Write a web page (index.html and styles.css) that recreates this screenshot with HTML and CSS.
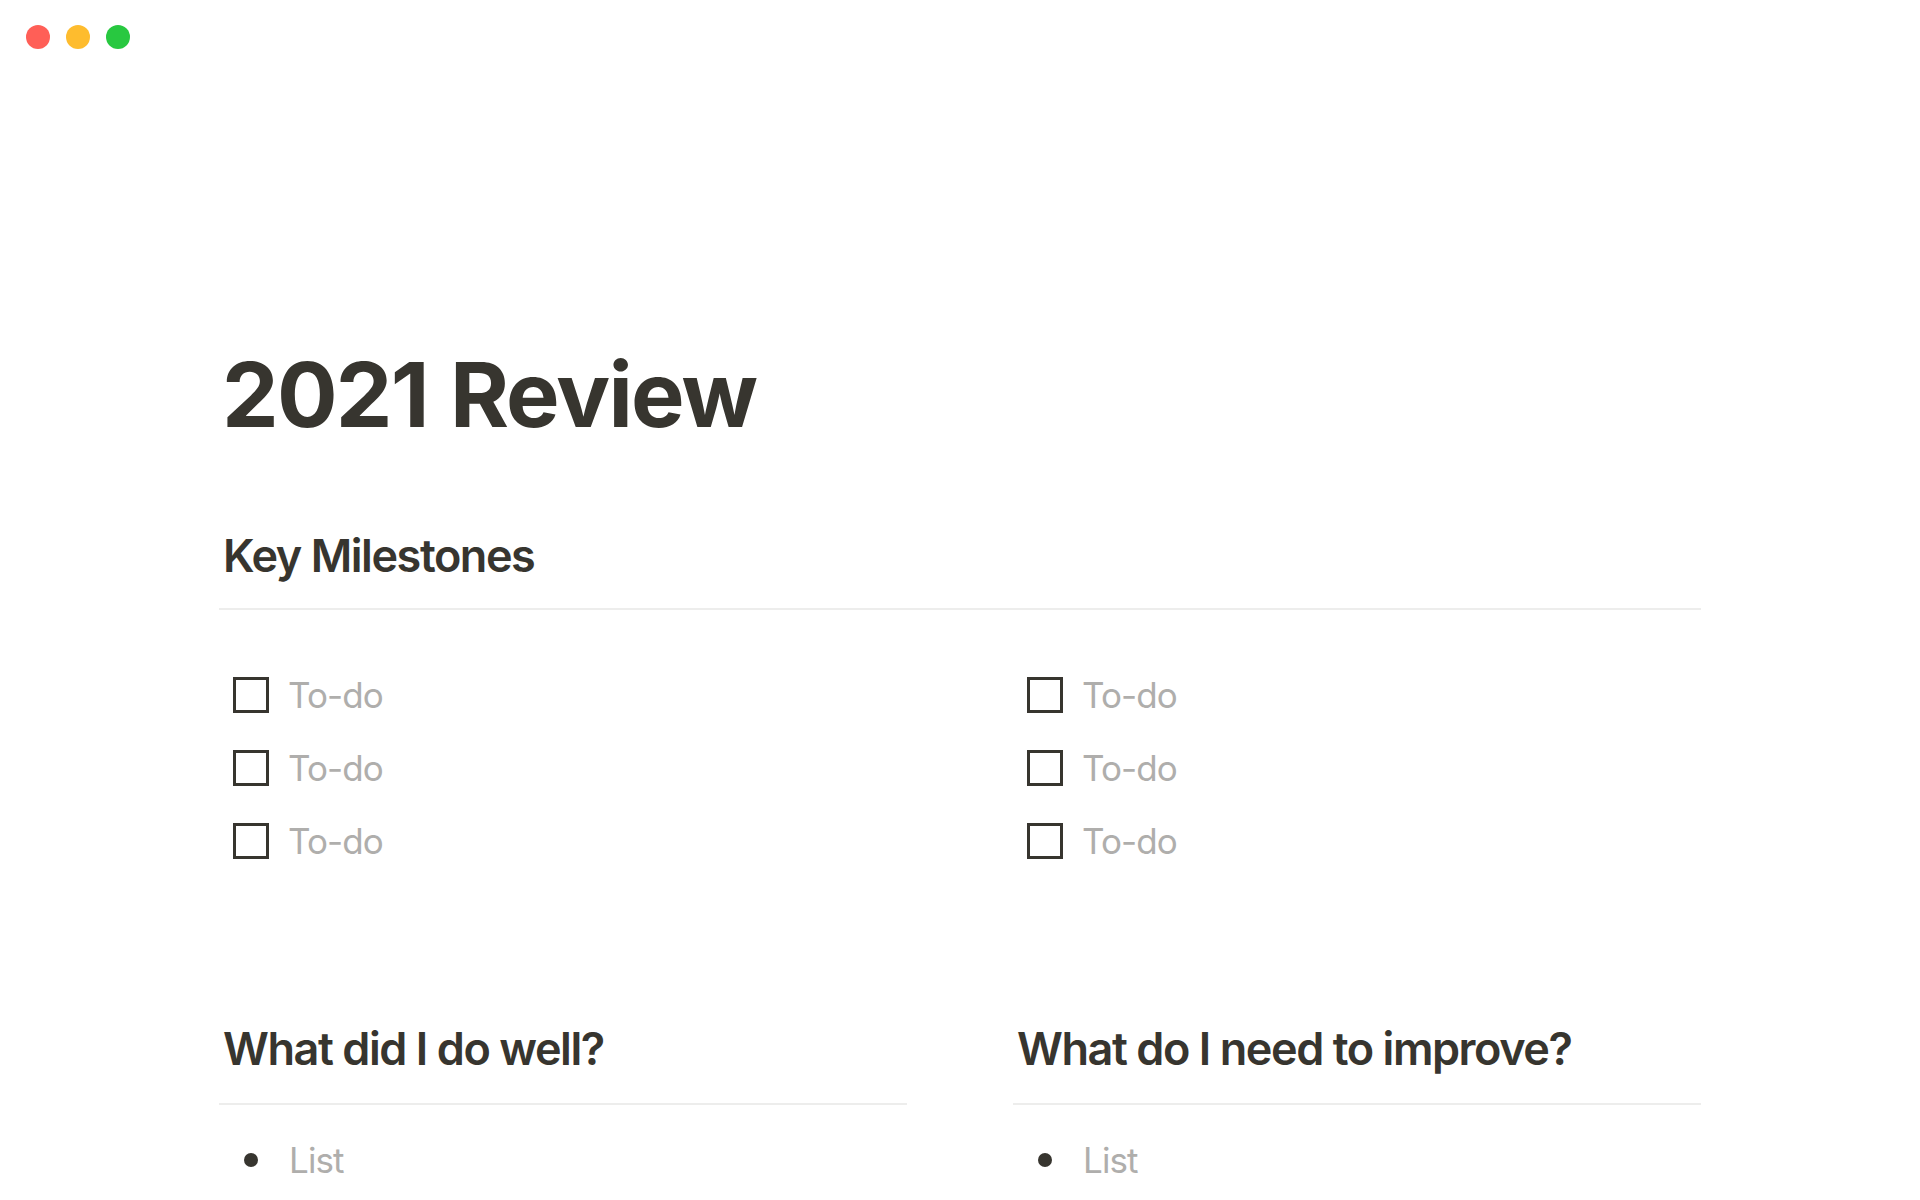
FILE: index.html
```html
<!DOCTYPE html>
<html lang="en">
<head>
<meta charset="utf-8">
<title>2021 Review</title>
<link rel="stylesheet" href="styles.css">
</head>
<body>
<div class="window-bar">
  <span class="light red"></span>
  <span class="light yellow"></span>
  <span class="light green"></span>
</div>
<main class="page">
  <h1 class="title">2021 Review</h1>

  <section class="milestones">
    <h2 class="heading">Key Milestones</h2>
    <div class="divider"></div>
    <div class="columns todo-columns">
      <div class="todo-list">
        <div class="todo"><span class="checkbox"></span><span class="placeholder">To-do</span></div>
        <div class="todo"><span class="checkbox"></span><span class="placeholder">To-do</span></div>
        <div class="todo"><span class="checkbox"></span><span class="placeholder">To-do</span></div>
      </div>
      <div class="todo-list">
        <div class="todo"><span class="checkbox"></span><span class="placeholder">To-do</span></div>
        <div class="todo"><span class="checkbox"></span><span class="placeholder">To-do</span></div>
        <div class="todo"><span class="checkbox"></span><span class="placeholder">To-do</span></div>
      </div>
    </div>
  </section>

  <section class="columns reflection">
    <div class="column">
      <h2 class="heading">What did I do well?</h2>
      <div class="divider lower"></div>
      <div class="bullet-item"><span class="bullet"></span><span class="placeholder">List</span></div>
    </div>
    <div class="column">
      <h2 class="heading">What do I need to improve?</h2>
      <div class="divider lower"></div>
      <div class="bullet-item"><span class="bullet"></span><span class="placeholder">List</span></div>
    </div>
  </section>
</main>
</body>
</html>
```
FILE: styles.css
```css
* {
  box-sizing: border-box;
}

html, body {
  margin: 0;
  padding: 0;
  background: #ffffff;
}

body {
  font-family: Inter, "Noto Sans", "Liberation Sans", sans-serif;
  color: #37352F;
  width: 1920px;
  height: 1200px;
  overflow: hidden;
}

.window-bar {
  display: flex;
  gap: 16px;
  padding: 25px 0 0 26px;
  height: 49px;
}

.light {
  width: 24px;
  height: 24px;
  border-radius: 50%;
  display: block;
}

.red { background: #FF5F57; }
.yellow { background: #FEBC2E; }
.green { background: #28C840; }

.page {
  padding: 0 219px;
}

.title {
  margin: 292px 0 0 0;
  font-size: 90px;
  line-height: 108px;
  font-weight: 700;
  letter-spacing: -0.02em;
  word-spacing: 0.03em;
  padding-left: 3px;
}

.heading {
  margin: 0;
  font-size: 45px;
  line-height: 58px;
  font-weight: 600;
  letter-spacing: -0.032em;
  padding-left: 4px;
}

.milestones {
  margin-top: 78px;
}

.divider {
  height: 2px;
  background: #EDEDEC;
  margin-top: 23px;
}

.divider.lower {
  margin-top: 25px;
}

.columns {
  display: grid;
  grid-template-columns: 1fr 1fr;
  column-gap: 106px;
}

.todo-columns {
  margin-top: 48px;
}

.todo {
  display: flex;
  align-items: center;
  height: 73px;
  padding-left: 14px;
  gap: 19px;
}

.checkbox {
  width: 36px;
  height: 36px;
  border: 3px solid #37352F;
  flex: none;
}

.placeholder {
  font-size: 35px;
  line-height: 54px;
  letter-spacing: -0.025em;
  color: #AFAEAC;
}

.reflection {
  margin-top: 143px;
}

.bullet-item {
  display: flex;
  align-items: center;
  height: 54px;
  margin-top: 28px;
  padding-left: 25px;
  gap: 31px;
}

.bullet {
  width: 14px;
  height: 14px;
  border-radius: 50%;
  background: #37352F;
  flex: none;
}
```
